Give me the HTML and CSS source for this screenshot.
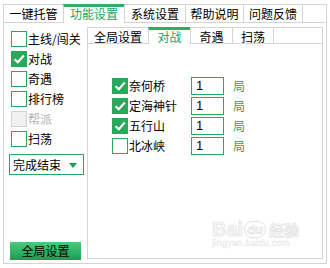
FILE: index.html
```html
<!DOCTYPE html>
<html lang="zh-CN">
<head>
<meta charset="utf-8">
<title>功能设置</title>
<link rel="stylesheet" href="styles.css">
</head>
<body>
<div class="app">
  <div class="tabs">
    <div class="tab w60">一键托管</div>
    <div class="tab w61 active">功能设置</div>
    <div class="tab w61">系统设置</div>
    <div class="tab w58">帮助说明</div>
    <div class="tab w59">问题反馈</div>
    <div class="tab filler"></div>
  </div>
  <div class="panel">
    <div class="side">
      <div class="opt"><span class="cb"></span><span>主线/闯关</span></div>
      <div class="opt"><span class="cb on"><svg viewBox="0 0 14 14" width="14" height="14"><path d="M2.5 7.2 L5.8 10.3 L11.8 3.6" fill="none" stroke="#fff" stroke-width="2.2"/></svg></span><span>对战</span></div>
      <div class="opt"><span class="cb"></span><span>奇遇</span></div>
      <div class="opt"><span class="cb"></span><span>排行榜</span></div>
      <div class="opt disabled"><span class="cb"></span><span>帮派</span></div>
      <div class="opt"><span class="cb"></span><span>扫荡</span></div>
      <div class="select"><span>完成结束</span><span class="caret"></span></div>
      <div class="btn">全局设置</div>
    </div>
    <div class="sub">
      <div class="subtabs">
        <div class="stab s61">全局设置</div>
        <div class="stab s42 active">对战</div>
        <div class="stab s42">奇遇</div>
        <div class="stab s41">扫荡</div>
        <div class="stab sfill"></div>
      </div>
      <div class="subbody">
        <div class="row"><span class="cb on"><svg viewBox="0 0 14 14" width="14" height="14"><path d="M2.5 7.2 L5.8 10.3 L11.8 3.6" fill="none" stroke="#fff" stroke-width="2.2"/></svg></span><span class="name">奈何桥</span><span class="num">1</span><span class="unit">局</span></div>
        <div class="row"><span class="cb on"><svg viewBox="0 0 14 14" width="14" height="14"><path d="M2.5 7.2 L5.8 10.3 L11.8 3.6" fill="none" stroke="#fff" stroke-width="2.2"/></svg></span><span class="name">定海神针</span><span class="num">1</span><span class="unit">局</span></div>
        <div class="row"><span class="cb on"><svg viewBox="0 0 14 14" width="14" height="14"><path d="M2.5 7.2 L5.8 10.3 L11.8 3.6" fill="none" stroke="#fff" stroke-width="2.2"/></svg></span><span class="name">五行山</span><span class="num">1</span><span class="unit">局</span></div>
        <div class="row"><span class="cb"></span><span class="name">北冰峡</span><span class="num">1</span><span class="unit">局</span></div>
      </div>
    </div>
  </div>
</div>
<div class="wm">
  <span class="wm-bai">Bai</span><span class="wm-du">du</span><span class="wm-jy">经验</span>
  <div class="wm-url">jingyan.baidu.com</div>
</div>
</body>
</html>
```

FILE: styles.css
```css
body {
  margin: 0;
  background: #fff;
  font-family: "Noto Sans CJK SC", sans-serif;
  font-size: 12px;
  color: #000;
}

.app {
  padding: 4px 0 0 3px;
  width: 324px;
}

/* top tabs */
.tabs {
  display: flex;
  height: 18px;
}
.tab {
  box-sizing: border-box;
  height: 18px;
  border-top: 1px solid #d4d4d4;
  border-left: 1px solid #d4d4d4;
  text-align: center;
  line-height: 17px;
  white-space: nowrap;
}
.w60 { width: 60px; }
.w61 { width: 61px; }
.w58 { width: 58px; }
.w59 { width: 59px; }
.tab.filler {
  width: 25px;
  border-right: 1px solid #d4d4d4;
}
.tab.active {
  border-top: 3px solid #2dae62;
  color: #22a35a;
  height: 19px;
  margin-bottom: -1px;
  background: #fff;
  line-height: 13px;
  position: relative;
  z-index: 1;
}

/* main panel */
.panel {
  box-sizing: border-box;
  display: flex;
  width: 324px;
  height: 242px;
  border: 1px solid #d4d4d4;
  padding: 4px 3px 4px 0;
}

.side {
  box-sizing: border-box;
  width: 83px;
  margin: -4px 0;
  padding: 8px 0 3px 5px;
  display: flex;
  flex-direction: column;
}

.opt {
  display: flex;
  align-items: center;
  height: 16px;
  margin: 0 0 4px 2px;
  line-height: 16px;
  white-space: nowrap;
}
.opt .cb { margin-right: 1px; }
.opt.disabled { color: #b4b4b4; }
.opt.disabled .cb {
  border-color: #d2d2d2;
  background: #f0f0f0;
}

.cb {
  box-sizing: border-box;
  flex: none;
  width: 16px;
  height: 16px;
  border: 1px solid #2aa85c;
  background: #fff;
  display: flex;
  align-items: center;
  justify-content: center;
}
.cb.on { background: #2aa85c; }
.cb svg { display: block; }

.select {
  box-sizing: border-box;
  margin-top: 3px;
  width: 75px;
  height: 21px;
  border: 1px solid #2aa85c;
  display: flex;
  align-items: center;
  justify-content: space-between;
  padding: 0 6px 0 3px;
  line-height: 19px;
}
.caret {
  width: 0;
  height: 0;
  border-left: 4px solid transparent;
  border-right: 4px solid transparent;
  border-top: 5px solid #1e9a50;
  margin-top: 1px;
}

.btn {
  margin-top: auto;
  margin-left: 1px;
  width: 71px;
  height: 18px;
  background: linear-gradient(#46cc7c, #1d9b50);
  text-align: center;
  line-height: 18px;
  color: #000;
}

/* sub tabs */
.sub {
  width: 236px;
  display: flex;
  flex-direction: column;
}
.subtabs {
  display: flex;
  height: 16px;
}
.stab {
  box-sizing: border-box;
  height: 16px;
  border-top: 1px solid #d4d4d4;
  border-left: 1px solid #d4d4d4;
  text-align: center;
  line-height: 17px;
  white-space: nowrap;
}
.s61 { width: 61px; }
.s42 { width: 42px; }
.s41 { width: 41px; }
.stab.sfill {
  width: 50px;
  border-right: 1px solid #d4d4d4;
}
.stab.active {
  border-top: 3px solid #2dae62;
  color: #22a35a;
  height: 17px;
  margin-bottom: -1px;
  background: #fff;
  line-height: 13px;
  position: relative;
  z-index: 1;
}
.subbody {
  flex: 1;
  border: 1px solid #d4d4d4;
  padding: 33px 0 0 24px;
}

.row {
  display: flex;
  align-items: center;
  height: 18px;
  margin-bottom: 2px;
  white-space: nowrap;
}
.row .cb { margin-right: 1px; }
.name {
  width: 62px;
  line-height: 18px;
}
.num {
  box-sizing: border-box;
  width: 33px;
  height: 18px;
  border: 1px solid #2aa85c;
  padding-left: 4px;
  font-family: "Liberation Sans", Arial, sans-serif;
  font-size: 13px;
  line-height: 16px;
}
.unit {
  margin-left: 9px;
  color: #2aa85c;
  line-height: 18px;
}

/* faint watermark overlay */
.wm {
  position: absolute;
  left: 212px;
  top: 218px;
  width: 92px;
  color: #f7f7f7;
  -webkit-text-stroke: 0.7px #e2e2e2;
  pointer-events: none;
  white-space: nowrap;
}
.wm-bai {
  font-family: "Liberation Sans", sans-serif;
  font-weight: bold;
  font-size: 20px;
}
.wm-du {
  display: inline-block;
  font-family: "Liberation Sans", sans-serif;
  font-weight: bold;
  font-size: 13px;
  border: 1px solid #e2e2e2;
  border-radius: 8px;
  padding: 0 2px;
  margin: 0 3px 0 1px;
  vertical-align: 2px;
}
.wm-jy {
  font-size: 15px;
  font-weight: bold;
}
.wm-url {
  font-family: "Liberation Sans", sans-serif;
  font-size: 9px;
  color: #fafafa;
  -webkit-text-stroke: 0.4px #e6e6e6;
  margin-top: -3px;
  letter-spacing: 0.3px;
}
```
